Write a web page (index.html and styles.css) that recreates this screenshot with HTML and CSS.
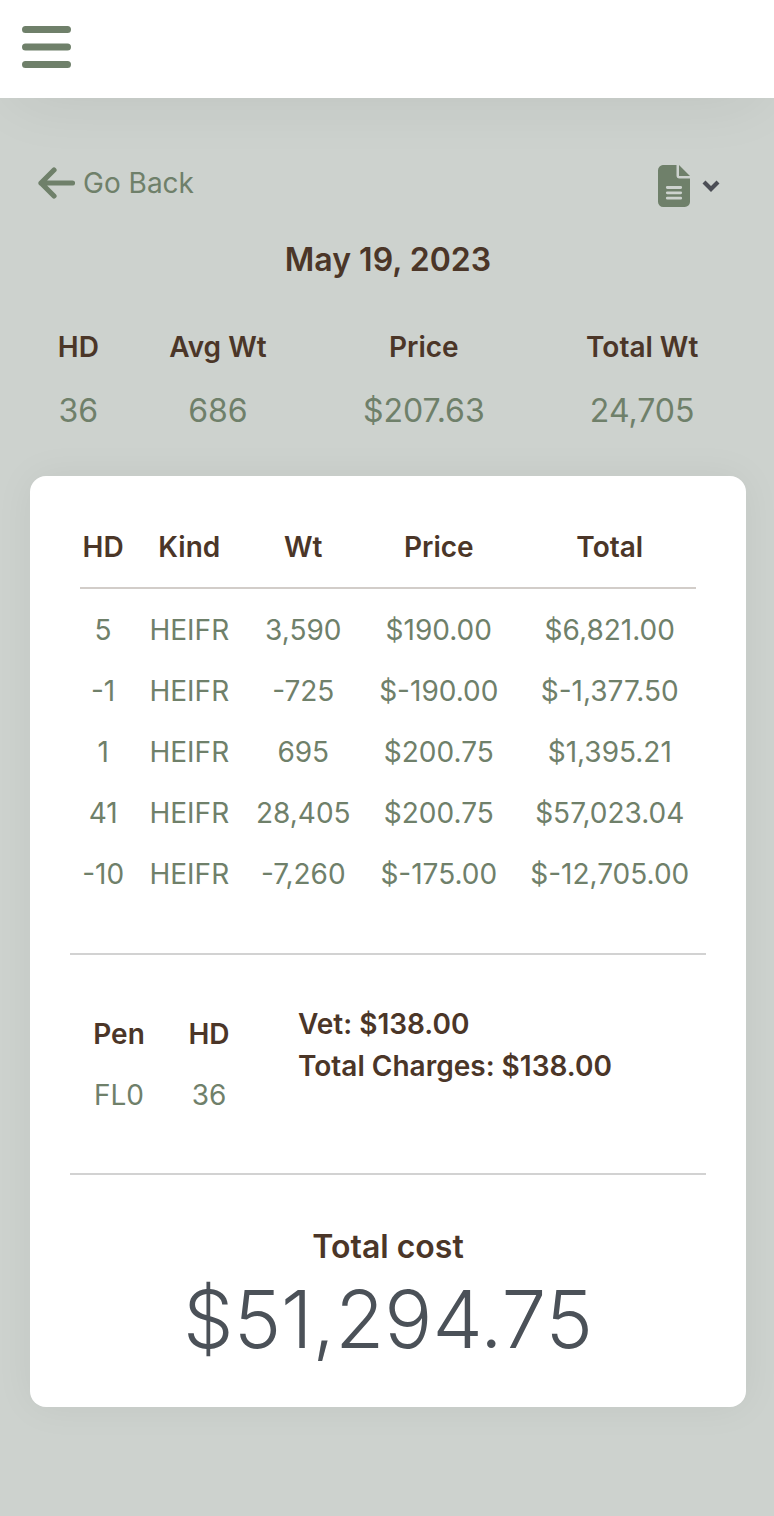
FILE: index.html
```html
<!DOCTYPE html>
<html lang="en">
<head>
  <meta charset="UTF-8">
  <meta name="viewport" content="width=device-width, initial-scale=1.0">
  <title>May 19, 2023</title>
  <link rel="stylesheet" href="styles.css">
</head>
<body>
  <header class="header">
    <button class="menu-btn" type="button" aria-label="Menu">
      <svg width="49" height="42" viewBox="0 0 49 42">
        <path d="M3.5 3.5h42M3.5 21h42M3.5 38.5h42" fill="none" stroke="currentColor" stroke-width="7" stroke-linecap="round"/>
      </svg>
    </button>
  </header>
  <main class="page">
    <div class="toolbar">
      <a class="go-back" href="#">
        <svg width="37" height="32" viewBox="0 0 37 32">
          <path d="M16 3L3 16l13 13M3 16h31.500" fill="none" stroke="currentColor" stroke-width="5.200" stroke-linecap="round" stroke-linejoin="round"/>
        </svg>
        Go Back
      </a>
      <button class="doc-btn" type="button" aria-label="Document options">
        <svg class="doc-icon" width="32" height="42" viewBox="0 0 32 42">
          <path d="M5.500 0H18.500V10.500A3 3 0 0 0 21.500 13.500H32V37A5.200 5.200 0 0 1 26.800 42H5.200A5.200 5.200 0 0 1 0 36.800V5.200A5.200 5.200 0 0 1 5.500 0zM21 0V11H32z" fill="currentColor"/>
          <path d="M9.300 22.500h13.400M9.300 27.800h13.400M9.300 33.200h13.400" fill="none" stroke="#cdd2ce" stroke-width="2.800" stroke-linecap="round"/>
        </svg>
        <svg class="chevron" width="18" height="12" viewBox="0 0 18 12">
          <path d="M2 2l7 7 7-7" fill="none" stroke="currentColor" stroke-width="4.200"/>
        </svg>
      </button>
    </div>
    <h1 class="date">May 19, 2023</h1>
    <table class="summary">
      <thead>
        <tr><th>HD</th><th>Avg Wt</th><th>Price</th><th>Total Wt</th></tr>
      </thead>
      <tbody>
        <tr><td>36</td><td>686</td><td>$207.63</td><td>24,705</td></tr>
      </tbody>
    </table>
    <section class="card">
      <table class="lots">
        <thead>
          <tr><th>HD</th><th>Kind</th><th>Wt</th><th>Price</th><th>Total</th></tr>
        </thead>
        <tbody>
          <tr><td>5</td><td>HEIFR</td><td>3,590</td><td>$190.00</td><td>$6,821.00</td></tr>
          <tr><td>-1</td><td>HEIFR</td><td>-725</td><td>$-190.00</td><td>$-1,377.50</td></tr>
          <tr><td>1</td><td>HEIFR</td><td>695</td><td>$200.75</td><td>$1,395.21</td></tr>
          <tr><td>41</td><td>HEIFR</td><td>28,405</td><td>$200.75</td><td>$57,023.04</td></tr>
          <tr><td>-10</td><td>HEIFR</td><td>-7,260</td><td>$-175.00</td><td>$-12,705.00</td></tr>
        </tbody>
      </table>
      <div class="details">
        <table class="pens">
          <thead>
            <tr><th>Pen</th><th>HD</th></tr>
          </thead>
          <tbody>
            <tr><td>FL0</td><td>36</td></tr>
          </tbody>
        </table>
        <div class="charges">
          <p>Vet: $138.00</p>
          <p>Total Charges: $138.00</p>
        </div>
      </div>
      <div class="total">
        <h2>Total cost</h2>
        <p class="total-cost">$51,294.75</p>
      </div>
    </section>
  </main>
</body>
</html>
```
FILE: styles.css
```css
* {
  box-sizing: border-box;
}
body {
  margin: 0;
  min-height: 100vh;
  background: #cdd2ce;
  color: #6f806a;
  font-family: Inter, "Liberation Sans", sans-serif;
  font-size: 28px;
  line-height: 42px;
}
h1, h2, p {
  margin: 0;
}
button {
  padding: 0;
  border: 0;
  background: none;
  cursor: pointer;
}
svg {
  display: block;
}
.header {
  display: flex;
  align-items: center;
  height: 98px;
  padding: 0 22px 4px;
  background: #fff;
  box-shadow: 0 16px 64px -16px rgba(0, 0, 0, 0.08);
}
.menu-btn {
  color: #6f806a;
}
.page {
  padding: 64px 28px 40px 30px;
}
.toolbar {
  display: flex;
  justify-content: space-between;
  align-items: flex-end;
  padding: 0 26px 0 8px;
}
.go-back {
  display: flex;
  align-items: center;
  gap: 8px;
  padding-bottom: 6px;
  color: #6f806a;
  text-decoration: none;
}
.doc-btn {
  display: flex;
  align-items: center;
  gap: 12px;
  height: 48px;
  color: #6f806a;
}
.chevron {
  color: #4b4e55;
}
.date {
  margin-top: 26px;
  color: #4b3628;
  font-size: 32px;
  font-weight: 600;
  line-height: 48px;
  text-align: center;
}
table {
  width: 100%;
  border-spacing: 0;
  table-layout: fixed;
  text-align: center;
}
th, td {
  padding: 0;
  white-space: nowrap;
}
th {
  color: #4b3628;
  font-weight: 600;
}
.summary {
  margin-top: 42px;
}
.summary td {
  padding-top: 19px;
  font-size: 32px;
  line-height: 48px;
}
.summary th:nth-child(1) { width: 13.5%; }
.summary th:nth-child(2) { width: 25.5%; }
.summary th:nth-child(3) { width: 32%; }
.summary th:nth-child(4) { width: 29%; }
.card {
  margin-top: 41px;
  padding: 40px;
  border-radius: 16px;
  background: #fff;
  box-shadow: 0 0 40px rgba(0, 0, 0, 0.05);
}
.lots {
  width: calc(100% - 20px);
  margin: 0 10px 49px;
}
.lots th {
  padding: 10px 0 19px;
  border-bottom: 2px solid #d2cdc9;
}
.lots td {
  padding: 10px 0 9px;
}
.lots tbody::before {
  content: '';
  display: block;
  height: 10px;
}
.lots th:nth-child(1) { width: 7.5%; }
.lots th:nth-child(2) { width: 20.5%; }
.lots th:nth-child(3) { width: 16.5%; }
.lots th:nth-child(4) { width: 27.5%; }
.lots th:nth-child(5) { width: 28%; }
.details {
  display: flex;
  gap: 44px;
  padding: 48px 0 48px 4px;
  border-top: 2px solid #d2d2d2;
  border-bottom: 2px solid #d2d2d2;
}
.pens {
  width: 180px;
}
.pens th, .pens td {
  padding: 10px 0 9px;
}
.charges {
  color: #4b3628;
  font-weight: 600;
}
.total {
  padding-top: 48px;
  text-align: center;
}
.total h2 {
  color: #4b3628;
  font-size: 32px;
  font-weight: 600;
  line-height: 48px;
}
.total-cost {
  color: #4b5158;
  font-size: 80px;
  font-weight: 300;
  line-height: 96px;
}
```
